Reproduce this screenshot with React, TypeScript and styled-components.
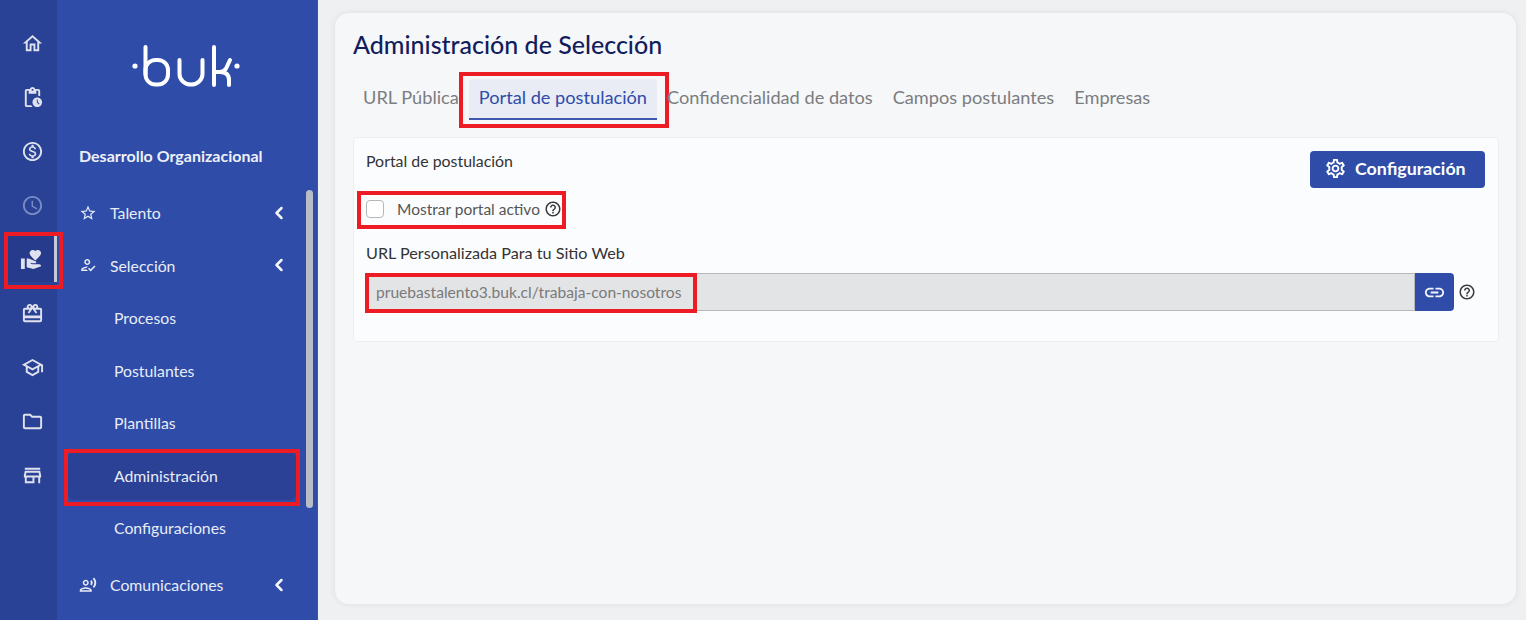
import React from "react";
import styled, { createGlobalStyle } from "styled-components";
import { ChevronLeft } from "lucide-react";
import {
  MdOutlineHome,
  MdOutlinePendingActions,
  MdOutlineMonetizationOn,
  MdOutlineSchedule,
  MdVolunteerActivism,
  MdOutlineCardGiftcard,
  MdOutlineSchool,
  MdOutlineFolder,
  MdOutlineStore,
  MdOutlineStarBorder,
  MdOutlineHowToReg,
  MdOutlineRecordVoiceOver,
  MdOutlineSettings,
  MdLink,
  MdOutlineHelpOutline,
} from "react-icons/md";

const GlobalStyle = createGlobalStyle`
  html, body {
    margin: 0;
    padding: 0;
    height: 100%;
    overflow: hidden;
    font-family: "Lato", "Noto Sans", sans-serif;
  }
  *, *::before, *::after { box-sizing: border-box; }
`;

const Page = styled.div`
  display: flex;
  width: 1526px;
  height: 620px;
  overflow: hidden;
  background: #eff0f2;
`;

const Rail = styled.nav`
  position: relative;
  z-index: 2;
  width: 57px;
  flex: none;
  display: flex;
  flex-direction: column;
  padding: 16px 0 0 8px;
  background: #2a4296;
`;

const RailItem = styled.div<{ $dim?: boolean; $active?: boolean }>`
  position: relative;
  height: 54px;
  display: flex;
  align-items: center;
  justify-content: center;
  color: ${(p) => (p.$dim ? "#7a8cc4" : "#dfe2ee")};
  font-size: 23px;

  ${(p) =>
    p.$active &&
    `
    &::before {
      content: "";
      position: absolute;
      left: 0;
      right: 0;
      top: 4px;
      bottom: 4px;
      background: #273b8c;
      border-right: 3px solid #c6cad6;
    }
    &::after {
      content: "";
      position: absolute;
      left: -4px;
      right: -6px;
      top: 0;
      bottom: -3px;
      border: 4px solid #ed1c24;
    }
    svg { position: relative; z-index: 1; margin-right: 2px; }
  `}
`;

const SideNav = styled.aside`
  position: relative;
  width: 261px;
  flex: none;
  display: flex;
  flex-direction: column;
  overflow: hidden;
  background: #2e4ca8;
  border-right: 1px solid #3a57ae;
  color: #e9ecf6;
`;

const LogoBox = styled.div`
  display: flex;
  justify-content: center;
  padding: 44px 2px 0 0;
  height: 146px;
  svg {
    display: block;
  }
`;

const SectionTitle = styled.div`
  margin-left: 22px;
  font-size: 16px;
  font-weight: 700;
  line-height: 20px;
  height: 31px;
  color: #eef0f8;
`;

const NavList = styled.div`
  display: flex;
  flex-direction: column;
  padding-top: 9.5px;
`;

const GroupRow = styled.div<{ $gapTop?: boolean }>`
  height: 52.5px;
  display: flex;
  align-items: center;
  padding-left: 22px;
  font-size: 15.8px;
  margin-top: ${(p) => (p.$gapTop ? "4.5px" : "0")};
  svg:first-child {
    font-size: 18px;
    flex: none;
  }
  span {
    margin-left: 13px;
    flex: 1;
  }
  svg:last-child {
    width: 20px;
    height: 20px;
    margin-right: 28px;
    color: #f4f5fb;
    stroke-width: 3;
  }
`;

const SubRow = styled.div<{ $active?: boolean }>`
  position: relative;
  height: 52.5px;
  display: flex;
  align-items: center;
  padding-left: 57px;
  font-size: 15.8px;

  ${(p) =>
    p.$active &&
    `
    &::before {
      content: "";
      position: absolute;
      left: 11px;
      width: 228px;
      top: 3px;
      height: 48px;
      border-radius: 6px;
      background: #2a4195;
    }
    &::after {
      content: "";
      position: absolute;
      left: 7px;
      width: 236px;
      top: 0;
      height: 57px;
      border: 4px solid #ed1c24;
    }
    span { position: relative; z-index: 1; }
  `}
`;

const ScrollThumb = styled.div`
  position: absolute;
  left: 249px;
  top: 190px;
  width: 7px;
  height: 318px;
  border-radius: 4px;
  background: #b9bdc8;
`;

const Main = styled.main`
  flex: 1;
  min-width: 0;
  padding: 13px 10px 16px 17px;
`;

const Card = styled.section`
  height: 100%;
  padding: 17px 17px 0 18px;
  border-radius: 14px;
  background: #f6f7f9;
  box-shadow: 0 0 6px rgba(0, 0, 0, 0.08);
`;

const Title = styled.h1`
  margin: 0;
  height: 49px;
  font-size: 25px;
  font-weight: 500;
  line-height: 29px;
  color: #111d5c;
`;

const Tabs = styled.div`
  display: flex;
  height: 41px;
  margin-bottom: 17px;
`;

const Tab = styled.div<{ $active?: boolean }>`
  position: relative;
  display: flex;
  align-items: center;
  padding: 0 10px 3px;
  border-radius: 4px 4px 0 0;
  font-size: 18.2px;
  color: ${(p) => (p.$active ? "#2e4ca8" : "#7b7d80")};
  background: ${(p) => (p.$active ? "#e9ebf5" : "transparent")};
  border-bottom: 2px solid ${(p) => (p.$active ? "#3d58ae" : "transparent")};

  ${(p) =>
    p.$active &&
    `
    &::after {
      content: "";
      position: absolute;
      left: -10px;
      right: -12px;
      top: -7px;
      bottom: -10px;
      border: 4px solid #ed1c24;
    }
  `}
`;

const Panel = styled.div`
  height: 205px;
  padding: 13px 13px 0 12px;
  border: 1px solid #eceef0;
  border-radius: 4px;
  background: #fbfcfe;
`;

const PanelHeader = styled.div`
  display: flex;
  justify-content: space-between;
  align-items: flex-start;
  height: 47px;
`;

const PanelTitle = styled.div`
  font-size: 15.9px;
  line-height: 20px;
  color: #333;
`;

const PrimaryButton = styled.button`
  display: flex;
  align-items: center;
  gap: 8px;
  width: 175px;
  height: 37px;
  padding: 0 0 3px 14px;
  border: 0;
  border-radius: 4px;
  background: #2e4ca8;
  color: #fff;
  font: 700 17.8px "Lato", "Noto Sans", sans-serif;
  svg {
    font-size: 23px;
  }
`;

const CheckRow = styled.label`
  position: relative;
  display: flex;
  align-items: center;
  width: 196px;
  height: 22px;
  font-size: 15.5px;
  white-space: nowrap;
  color: #555;

  &::after {
    content: "";
    position: absolute;
    left: -9px;
    right: -4px;
    top: -7px;
    bottom: -9px;
    border: 4px solid #ed1c24;
  }
`;

const CheckBox = styled.span`
  width: 18px;
  height: 18px;
  flex: none;
  margin: 0 13px 0 0;
  border: 1px solid #b5b7ba;
  border-radius: 4px;
  background: #fff;
`;

const HelpIcon = styled(MdOutlineHelpOutline)`
  flex: none;
  font-size: 18px;
  margin-left: 4px;
  color: #3a3a3a;
`;

const FieldLabel = styled.div`
  margin-top: 23px;
  font-size: 16.2px;
  line-height: 19px;
  height: 20px;
  color: #333;
`;

const UrlRow = styled.div`
  display: flex;
  align-items: center;
  margin-top: 10px;
`;

const UrlField = styled.div`
  flex: none;
  width: 1049px;
  height: 38px;
  display: flex;
  align-items: center;
  border: 1px solid #b8b9ba;
  border-radius: 4px 0 0 4px;
  background: #e3e4e6;
`;

const UrlText = styled.span`
  position: relative;
  display: flex;
  align-items: center;
  width: 330px;
  height: 100%;
  padding-left: 9px;
  font-size: 15.6px;
  color: #7a7a7a;

  &::after {
    content: "";
    position: absolute;
    left: -2px;
    right: 0;
    top: -1px;
    bottom: -3px;
    border: 4px solid #ed1c24;
  }
`;

const LinkButton = styled.button`
  width: 39px;
  height: 38px;
  flex: none;
  display: flex;
  align-items: center;
  justify-content: center;
  border: 0;
  padding: 0;
  border-radius: 0 4px 4px 0;
  background: #2e4ca8;
  color: #f2f4fb;
  font-size: 23px;
`;

const Logo = () => (
  <svg width="112" height="44" viewBox="0 0 112 44" fill="none" stroke="#fff" strokeWidth="4" strokeLinecap="round">
    <circle cx="5" cy="22" r="2.6" fill="#fff" stroke="none" />
    <path d="M15.5 3V30" />
    <rect x="15.5" y="16" width="22.5" height="24.5" rx="10" />
    <path d="M49.5 16V30a11.5 10.5 0 0 0 23 0V16" />
    <path d="M84 3V41M84 28H90Q94 28 96 24.5L100 16M90 28Q99 28 99 36V41" />
    <circle cx="107" cy="22" r="2.6" fill="#fff" stroke="none" />
  </svg>
);

const App = () => {
  return (
    <Page>
      <GlobalStyle />
      <Rail>
        <RailItem><MdOutlineHome /></RailItem>
        <RailItem><MdOutlinePendingActions /></RailItem>
        <RailItem><MdOutlineMonetizationOn /></RailItem>
        <RailItem $dim><MdOutlineSchedule /></RailItem>
        <RailItem $active><MdVolunteerActivism /></RailItem>
        <RailItem><MdOutlineCardGiftcard /></RailItem>
        <RailItem><MdOutlineSchool /></RailItem>
        <RailItem><MdOutlineFolder /></RailItem>
        <RailItem><MdOutlineStore /></RailItem>
      </Rail>
      <SideNav>
        <LogoBox><Logo /></LogoBox>
        <SectionTitle>Desarrollo Organizacional</SectionTitle>
        <NavList>
          <GroupRow><MdOutlineStarBorder /><span>Talento</span><ChevronLeft /></GroupRow>
          <GroupRow><MdOutlineHowToReg /><span>Selección</span><ChevronLeft /></GroupRow>
          <SubRow><span>Procesos</span></SubRow>
          <SubRow><span>Postulantes</span></SubRow>
          <SubRow><span>Plantillas</span></SubRow>
          <SubRow $active><span>Administración</span></SubRow>
          <SubRow><span>Configuraciones</span></SubRow>
          <GroupRow $gapTop><MdOutlineRecordVoiceOver /><span>Comunicaciones</span><ChevronLeft /></GroupRow>
        </NavList>
        <ScrollThumb />
      </SideNav>
      <Main>
        <Card>
          <Title>Administración de Selección</Title>
          <Tabs>
            <Tab>URL Pública</Tab>
            <Tab $active>Portal de postulación</Tab>
            <Tab>Confidencialidad de datos</Tab>
            <Tab>Campos postulantes</Tab>
            <Tab>Empresas</Tab>
          </Tabs>
          <Panel>
            <PanelHeader>
              <PanelTitle>Portal de postulación</PanelTitle>
              <PrimaryButton><MdOutlineSettings />Configuración</PrimaryButton>
            </PanelHeader>
            <CheckRow>
              <CheckBox />
              Mostrar portal activo
              <HelpIcon />
            </CheckRow>
            <FieldLabel>URL Personalizada Para tu Sitio Web</FieldLabel>
            <UrlRow>
              <UrlField>
                <UrlText>pruebastalento3.buk.cl/trabaja-con-nosotros</UrlText>
              </UrlField>
              <LinkButton><MdLink /></LinkButton>
              <HelpIcon />
            </UrlRow>
          </Panel>
        </Card>
      </Main>
    </Page>
  );
};

export default App;
